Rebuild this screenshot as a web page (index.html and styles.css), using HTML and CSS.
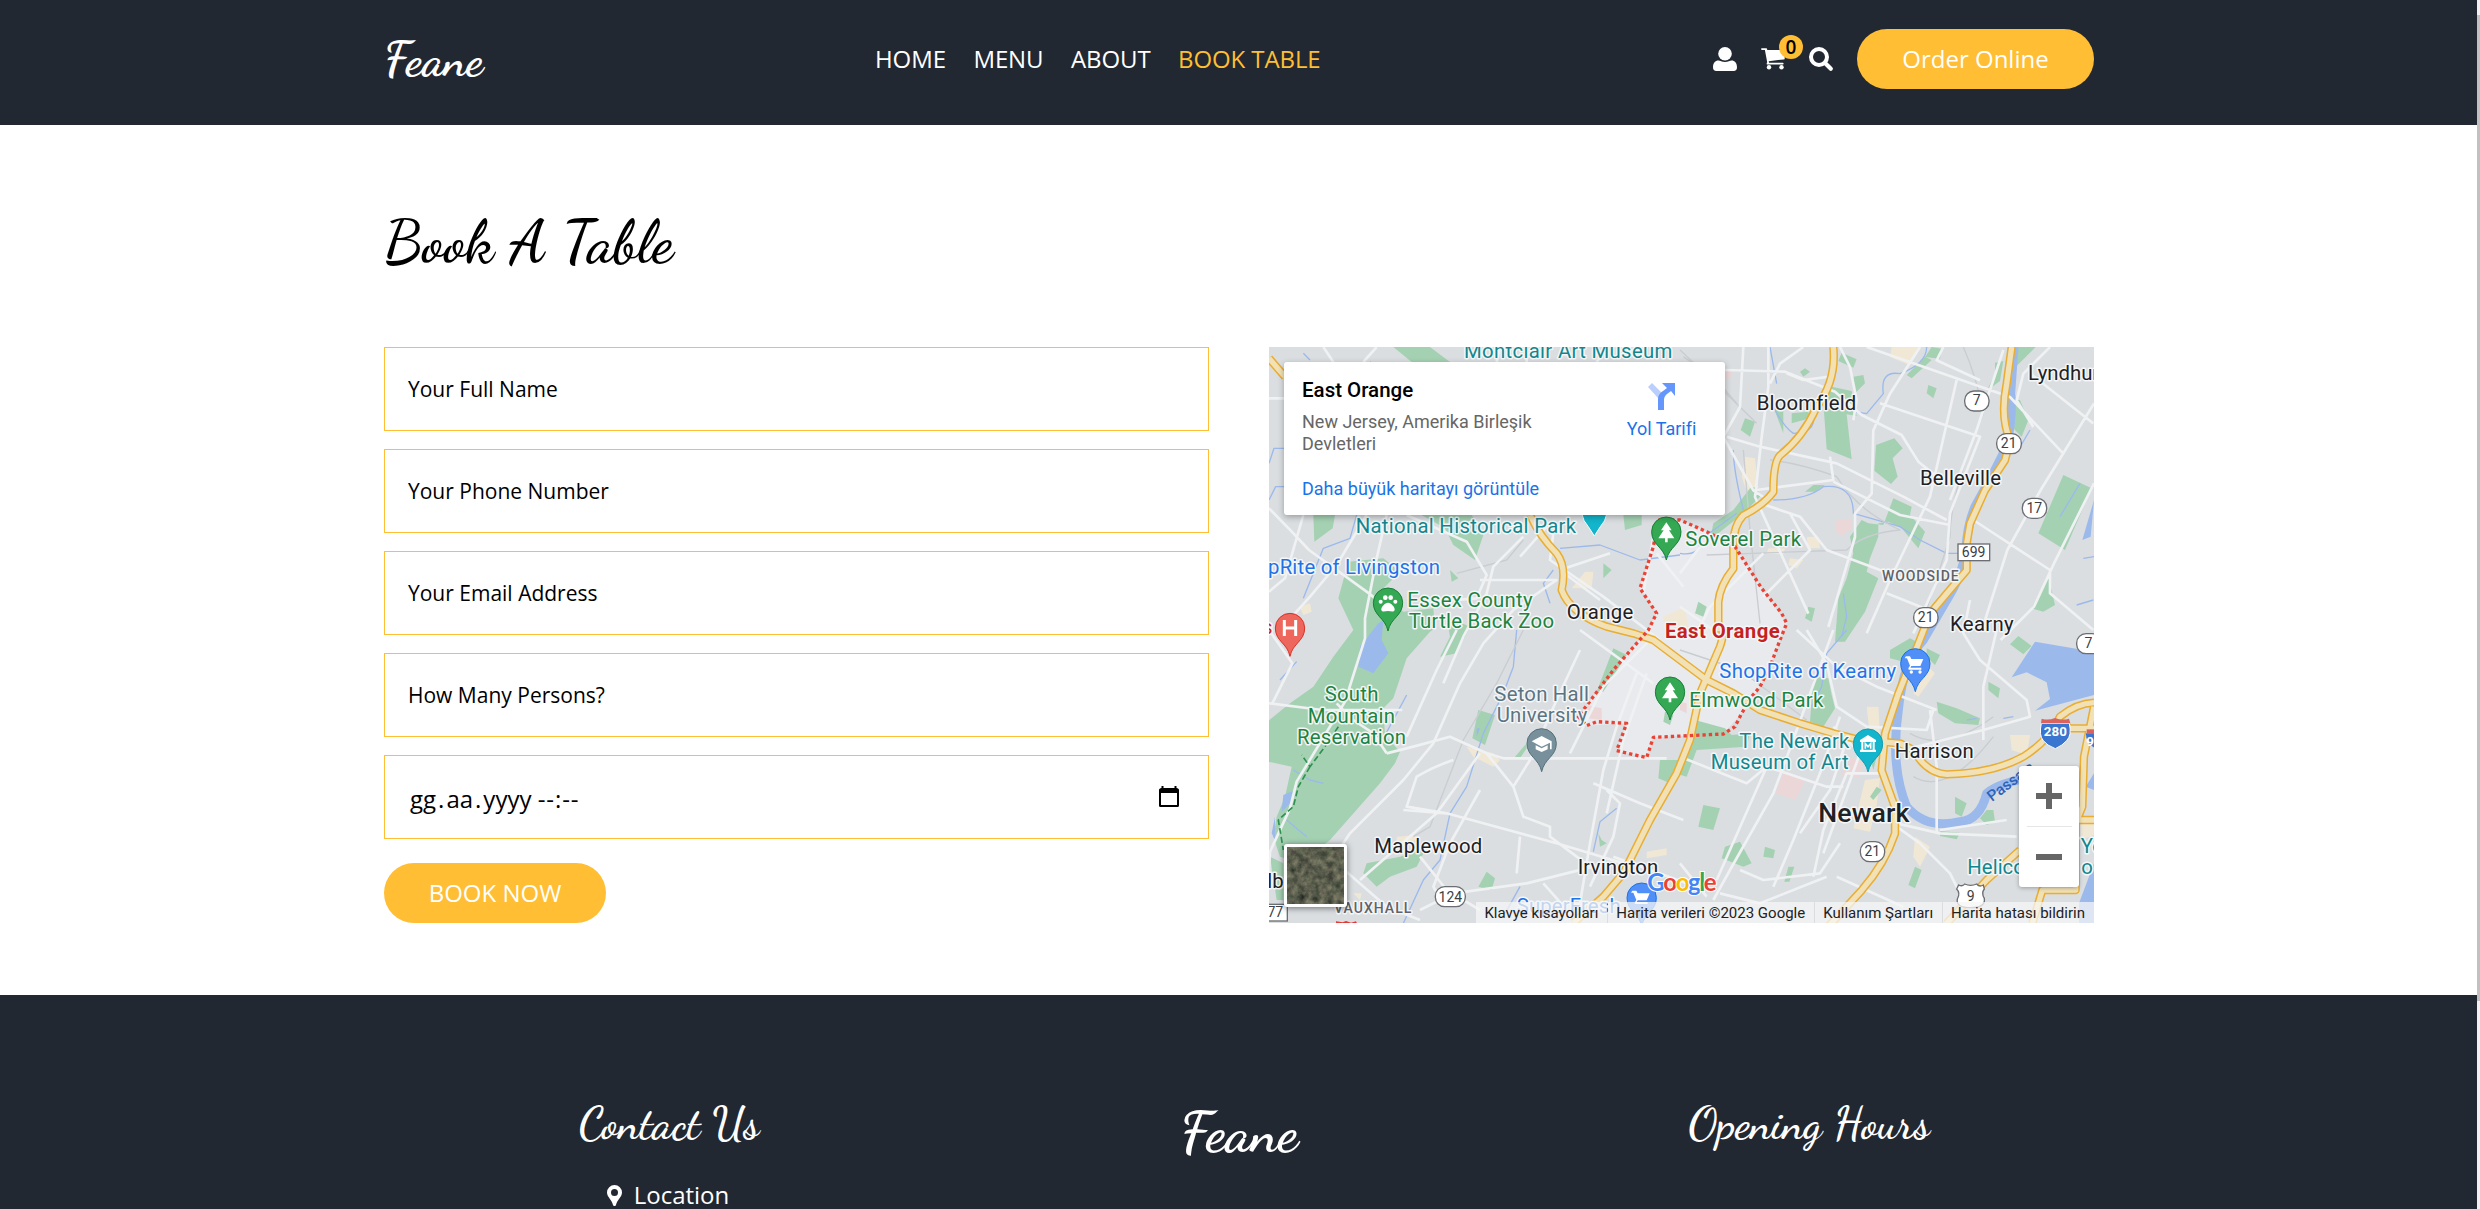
FILE: index.html
```html
<!DOCTYPE html>
<html lang="tr">
<head>
<meta charset="utf-8">
<title>Feane</title>
<link rel="stylesheet" href="styles.css">
</head>
<body>
<div class="page">
<header class="header">
  <div class="container nav">
    <a class="script brand">Feane</a>
    <nav class="links"><a>HOME</a><a>MENU</a><a>ABOUT</a><a class="active">BOOK TABLE</a></nav>
    <div class="user-option">
      <svg class="icon" viewBox="0 0 24 24"><circle cx="12" cy="6.8" r="6.8"/><path d="M0 20.2c0-4.6 2.3-6.8 5.4-6.8 1.7 0 3.5 1.6 6.6 1.6s4.9-1.6 6.6-1.6c3.100 0 5.400 2.200 5.400 6.800 0 2.500-1.200 3.800-3.300 3.800H3.300C1.200 24 0 22.700 0 20.200z"/></svg>
      <span class="cart">
        <svg class="icon" viewBox="0 0 24 24"><path d="M.8 1.200h4.300c.8 0 1 .6 1.200 1.700h16.400c.7 0 1 .4 1 1v7.500c0 .6-.4 1-.9 1L7.700 14.200l.3 1.600h13.700c1.200 0 1.200 1.800 0 1.800H6.700c-1.300 0-1.300-1.100-.5-2.400L3.900 3H.8C-.2 3-.2 1.200.8 1.200z"/><circle cx="8" cy="20.300" r="2.200"/><circle cx="20.500" cy="20.300" r="2.200"/></svg>
        <b class="badge">0</b>
      </span>
      <svg class="icon" viewBox="0 0 24 24"><circle cx="10" cy="10" r="8" fill="none" stroke="#fff" stroke-width="4"/><path d="M16.500 16.500l5.300 5.300" stroke="#fff" stroke-width="4.200" stroke-linecap="round"/></svg>
      <a class="btn order">Order Online</a>
    </div>
  </div>
</header>

<main class="container book">
  <h2 class="script title">Book A Table</h2>
  <div class="columns">
    <form class="form">
      <div class="field">Your Full Name</div>
      <div class="field">Your Phone Number</div>
      <div class="field">Your Email Address</div>
      <div class="field">How Many Persons?</div>
      <div class="field date"><span>gg<i>.</i>aa<i>.</i>yyyy <u>--:--</u></span>
        <svg class="cal" viewBox="0 0 20 22"><path fill-rule="evenodd" d="M2.500 0h2v2h11V0h2v2C19 2 20 3 20 4v15.500c0 1-.8 1.500-1.800 1.500H1.800C.8 21 0 20.500 0 19.500V4c0-1 1-2 2.500-2zM2 7v12h16V7z"/></svg>
      </div>
      <a class="btn submit">BOOK NOW</a>
    </form>
    <section class="map">
      <svg class="canvas" viewBox="27 21 2475 1728">
        <path class="inner" d="M1195 540L1260 540 1340 575 1425 620 1505 745 1580 850 1530 980 1500 1040 1445 1120 1390 1182 1180 1192 1160 1253 1070 1232 1100 1150 980 1157 955 1130 1060 990 1165 870 1190 820 1140 745 1180 620z"/>
        <g class="sand">
          <path d="M975 695l25 0-5 50-60 0zM120 800l30-10 5 25-25 10zM1210 830l65-30 15 90-70 10z"/>
          <path transform="translate(1260 0)" d="M635 21h85l-30 55-60-25zM195 350l30 5 10 90-35 10-15-45zM380 590l35 0 5 35-35 0zM265 625l50 0-5 18-50-2zM330 655l40 5-20 25-25-10z"/>
          <path transform="translate(0 870)" d="M620 350l80 20 20 20-20 20-60-30zM410 620l60-5-10 25-50 10zM1160 665l60-10 0 20-60 10zM280 790l25 0-5 20z"/>
          <path transform="translate(1260 870)" d="M555 450l45-5-10 80-20 80-50-10zM560 230l35 0 5 90-30 0zM990 315l60 0-10 60-45-15zM705 620l45 30-30 60-20-30zM745 110l20 20-50 70-15-10zM1202 570l40-5v50l-40 15z"/>
        </g>
        <g class="rose">
          <path transform="translate(1260 0)" d="M470 540l45 0 0 25-30 22-20-15zM135 95h18v20h-18z"/>
          <path transform="translate(1260 870)" d="M310 425l65 30-30 55-58-20zM510 380l40 15-15 50-50-10zM0 215l20 5 0 30-20-10z"/>
          <path d="M980 1095l45 10 0 35-40-5z"/>
        </g>
        <g class="park">
          <path d="M400 21h110l60 45H455zM160 525h65l-7 40-55 40zM485 525h150l35 60-25 75-65-45-25-50zM1090 525h55v30l-50 15zM570 690l25 25-20 10zM1030 670l25 20-25 25zM280 870l-45-95 30-110 105-10 50 40-60 60 70 60 90-10 5 60-15 10-70 80-40 120-30 30 5 80 45 50-15 35-45 60-150 170-90 70-60-20-20-60 10-60 25-60 20-90-95-20v-95l40-35 50-40 70-50 60-90zM560 830l70 30-40 80-50 10 30-60z"/>
          <path transform="translate(1260 0)" d="M485 38l45 20-10 25-45-20zM755 21l30 5-5 30-45-5zM735 50l20 10-60 55-15-10zM360 95l15-10 15 10-20 15zM520 110l30-5 5 25-30 30zM445 138l70 15 15 75-30-5 15 135-75-30-10-140zM335 220l50-5 5 20-55 15zM745 135l25 10-10 30-20-15zM945 68l25-5-10 60-40 30 25-50zM1012 21h55l-60 60zM995 180l25 0 25 60-20 50-30-30-15-45zM588 315l55-20 25 30-30 30 15 55-20 22-50-40zM195 235l30 10-15 45-28-20zM280 200h30v80zM210 445l20-5 10 30-30 30 15 20-60 20-75 60 10-50 60-40zM640 475l55 25-5 25 45 50-20 50-50-60-40-20-30 5 0 40-25 65-10 40 35 20-40 100-60 90h-30l10-130 25-60 20-75-10-50 35-50 20 10 45 5zM1150 405l85 40-80 185-80-50zM1105 705l20 90-35 20-35-10zM385 800l20 5-10 40-20-10zM55 785l25 15-10 30-25-10zM400 435l35 0-30 20-30 0z"/>
          <path transform="translate(0 870)" d="M1060 55l40 20-70 110-20 0zM655 240l50 15-30 90-38-20zM800 340l0 15-20 30-15-5zM1200 390l55 0-25 70-35-15zM1215 245l25 10-10 30-20-10zM320 700l100-20 80-30-30 60-80 30-40 30-40-40zM680 725l25 20-10 35-40-10zM1015 610l10 20 15 10-20 10zM30 680l40 20 0 110-20 0z"/>
          <path transform="translate(1260 870)" d="M45 270l90 25 20 20 55-5-10 40-150 10-30 80-35-10zM400 140l45 5 10 50 10 40-35 55-40-15zM630 60l60-35 20 10-40 60-40-10zM740 55l40 20-15 30-25-25zM770 215l60 20 70 30-5 20-70-5-50-30zM925 155l35 20-5 30-30-25zM1015 18l40 30-25 25-40-30zM70 525l50 10-20 65-45-10zM180 635l35 65-25 10-65-25 10-35zM255 650l30 10-5 25-30-5zM325 710h18l-15 45h-15zM825 500l35 20-15 40-20-10zM590 470l15 10-25 30-10-10zM780 603l60 5-10 20-50-10zM920 540l20 0 5 35-25 10-20-20zM705 710l20 10-20 55-20-10zM570 380l20 0-10 40z"/>
        </g>
        <g class="water">
          <path d="M355 850l15-10-5 60 20 40-45 60-45-20 5-60z"/>
          <path transform="translate(1260 0)" d="M1242 480l-10 110-25 10z"/>
          <path transform="translate(1260 870)" d="M1065 35l177 30v130l-177 47 45-35-10-50-60-30-45 15zM1242 430l-25 40 25 10zM1242 700l-45 120v60h45z"/>
          <path d="M70 1365l35-15-10 35-30 30zM45 1430l0 70-10-20zM650 1165l10 0-10 25z"/>
        </g>
        <g class="river">
          <path d="M2262 21L2252 160Q2260 215 2240 320L2200 400 2145 500Q2120 560 2118 630 2110 700 2060 780L1990 900Q1930 960 1915 1110 1890 1280 1940 1400 2000 1470 2100 1445 2160 1440 2180 1360 2240 1310 2440 1300"/>
        </g>
        <g class="creek">
          <path d="M320 205l-20 10M330 65l15 15M27 370l15-45h35M27 480l20-40 60 0M290 525l-20 70-80 30-60 150M900 625l120-10 120 45 120-15M880 690l-30 40 20 60M60 1020l50-55M440 1065l-70 130-60 10M770 870l-10 110-30 80-60 120-50 160-50 80-30 140-50 60-60 130-160 60-30-10M1070 1405l-50 40-20 90M100 1290l50 30 40 10M80 1440l60 50M780 1640l-50 90M150 60l-20-20"/>
          <path transform="translate(1260 0)" d="M270 21l20 110M740 21q0 50-80 80-60-10-50 60l-50 60-60-10M280 200q30 60 60 80 70 0 60-60M1050 270l-35 60M280 480q100 0 150-40 90-10 90 80l140 40 60 40 80 40h50M160 330q0 60 30 180M0 640q60 10 60-40l110-80M1200 430l-60 100M490 760l10 70-15 60M1210 655l32-5M1190 795l50-15"/>
          <path transform="translate(1260 870)" d="M500 0l-60 70-15 100-30 60M970 265l30-5M860 270l30-5"/>
        </g>
        <g class="rail">
          <path d="M1270 50l100 70 60 70M790 870l-80 160-100 170-100 260-50 30M790 600l-50 60-150 40"/>
          <path transform="translate(1260 0)" d="M0 30q120 110 230 220M850 21q40 90 60 200-100 240-100 370l-90 280M270 360q90 10 200 50 60 100 190 160-110 10-160 60l-420 15M190 330l20 240 30 280"/>
          <path transform="translate(1260 870)" d="M0 60l180 60 200 150M690 310q100 60 250-50M700 440q100 60 240-120"/>
        </g>
        <g class="road">
          <path d="M27 175h45M190 21l30 45M350 21l-40 45M720 21l-10 45M800 21v45M1040 21l-30 45M27 505q60 60 120 125l180 130 70 60M130 525l-55 190-48 40M320 525l-90 150-80 95-90 100M380 525l-30 130-35 180 0 60-60 190-145 240-20 80-60 130-5 100M440 525l180 80 60 100-30 70-130 10M790 590l-90 90-20 80-70 130-60 140M860 560l-80 90M880 580l-10 80 160 110 170 130M1050 640l-150 50 120 90M660 720l230 0-130 90-90 100-70 120-80 180-90 110-160 160-100 150M1190 640l80 100M1180 590l-30 170"/>
          <path transform="translate(1260 0)" d="M135 90l180 5 150 60 80 70 120 60 50 80 50 40M190 21l-10 180-50 90 90 160 30 20M265 21l0 120-20 150-20 180 160 350M370 21l-70 50-30 60M320 100l50 20 80-10M480 21l30 60 20 100-10 60M720 21l-90 140-50 110-5 190-50 60 0 70-50 170-30 100M560 21l430 150 160 170M790 21l-20 40 130 60M830 120l-80 350-120 250-70 160M600 190l300 100-90 230-10 140-100 220M140 290l100 30 230 50 200 100 130 70M970 30l-20 60-60 180-80 210M1110 21l-80 80-20 80 50 80M1050 100l190 150M1242 190l-160 260-100 180-70 220M1242 430l-120 240-60 130-100 100M230 450l230-30-10-70M460 425l200 100 150 30M240 490l120 40 80 100 240 90M880 540l230 150 0 70 130 110M0 800l100 70M250 640l-160 160-50 100M60 620l-60 80M620 760l150 60M330 520l60 110-80 80-60 60"/>
          <path transform="translate(0 870)" d="M27 220l160 20 240 0M380 370l80-20 110-30 110 50 50 15h150l340 0M380 370l-40-60-60-40-50-50M590 0l-60 120-90 200M760 470l50-80 80-180 70-150M680 370l80 100 30 90 80 30 0 30 120 90M660 480l-90 160-50 130 30 50M560 550l330 90 200 60M660 370l-130 180-230 200M430 540l130 10M580 390q-60 20-110 50l-30 90 120 20M1130 130l-60 160-40 130-40 220-30 180M1000 460l140 60 130 50M1170 30l-140 140-100 200M1160 130l-70 200-50 220M1040 480l40 40-20 100-70 150M960 0l220 160M660 840l-100-60-80-100M230 700l150 130 100 40M480 840l100-50 220-30 200-50M850 760l80 90M1060 680l220 80M780 620l-10 110M27 0l70 100-60 120"/>
          <path transform="translate(1260 870)" d="M0 380l200 80 60-50 180 60 50 0M0 700l80 100M260 410l-150 340M460 0l-150 410-30 80-130 230-50 90M350 0l120 110 120 60 180 70M480 260l-60 170-80 200-60 140M600 430l-100 0-70 170-30 140M460 290l80 80-110 300M380 0l60 100 30 130 90 60 180 10 20-60M750 240l20 170v200M650 590l70 50 90 90 30 60M500 330l-50 150-90 130M600 340l70 20 240-60 140-40-10-50-140-120-50-80 20-100M650 580l130 30 230 10M910 330l0-160 40-170M180 720l70 30 170-20 20-30 40-60M470 740l200 90M120 790l120 30 200-80M780 600l200-30"/>
        </g>
        <g class="hwy-edge">
          <path d="M27 55L75 110M810 525Q840 590 890 640 920 680 905 750 930 820 1040 860L1120 880 1180 900 1260 960 1340 1020 1420 1060 1500 1110 1620 1150 1720 1180 1800 1200 1920 1210 1960 1230Q2000 1300 2060 1303 2200 1300 2290 1250 2370 1200 2400 1130 2450 1090 2502 1088"/>
          <path d="M1720 21q10 100-50 180-40 90-110 145-20 20-20 110-30 40-90 70-30 30-30 90v70q-40 50-45 100v80Q1400 860 1380 920L1320 1060 1290 1200 1250 1300 1170 1440 1090 1600 1030 1670 940 1749"/>
          <path d="M2255 21l-15 110q-20 100 10 170l-15 60-60 90-45 100-10 60v80q-60 70-110 130l-35 90-60 150-40 120-10 110 40 110v80q-30 90-100 170l-120 130-70 90"/>
          <path d="M2280 1530l-100 90-120 130M2502 1100l-30 150-5 150-20 50v200l-100 0-30 100M2502 1440h-60M2502 1165h-70l-50-20"/>
        </g>
        <g class="hwy">
          <path d="M27 55L75 110M810 525Q840 590 890 640 920 680 905 750 930 820 1040 860L1120 880 1180 900 1260 960 1340 1020 1420 1060 1500 1110 1620 1150 1720 1180 1800 1200 1920 1210 1960 1230Q2000 1300 2060 1303 2200 1300 2290 1250 2370 1200 2400 1130 2450 1090 2502 1088"/>
          <path d="M1720 21q10 100-50 180-40 90-110 145-20 20-20 110-30 40-90 70-30 30-30 90v70q-40 50-45 100v80Q1400 860 1380 920L1320 1060 1290 1200 1250 1300 1170 1440 1090 1600 1030 1670 940 1749"/>
          <path d="M2255 21l-15 110q-20 100 10 170l-15 60-60 90-45 100-10 60v80q-60 70-110 130l-35 90-60 150-40 120-10 110 40 110v80q-30 90-100 170l-120 130-70 90"/>
          <path d="M2280 1530l-100 90-120 130M2502 1100l-30 150-5 150-20 50v200l-100 0-30 100M2502 1440h-60M2502 1165h-70l-50-20"/>
        </g>
        <path class="trail" d="M235 1160l-40 60-45 60-25-35M150 1280l-35 60-15 60-45 40 15 90"/>
        <path class="border" d="M1195 540L1260 540 1340 575 1425 620 1505 745 1565 820 1580 850 1560 900 1530 980 1500 1040 1475 1070 1445 1120 1425 1160 1390 1182 1180 1192 1160 1253 1070 1232 1100 1150 1010 1145 980 1157 955 1130 1060 990 1165 870 1190 820 1140 745 1180 620z"/>

        <g class="pins">
          <path fill="#12b5cb" stroke="#fff" stroke-width="3" d="M965 520q5 25 20 40l18 28 18-28q15-15 20-40z"/>
          <g transform="translate(1219 575)"><path fill="#34a853" stroke="#188038" stroke-width="3" d="M0 85C-8 45-44 40-44 0a44 44 0 0 1 88 0C44 40 8 45 0 85z"/><path fill="#fff" d="M0-28l16 24h-8l16 24H4v12h-8V20h-20l16-24h-8z"/></g>
          <g transform="translate(384 788)"><path fill="#34a853" stroke="#188038" stroke-width="3" d="M0 85C-8 45-44 40-44 0a44 44 0 0 1 88 0C44 40 8 45 0 85z"/><path fill="#fff" d="M0 0c9 0 22 14 20 22-3 8-12 3-20 3s-17 5-20-3C-22 14-9 0 0 0z"/><circle class="w" cx="-22" cy="-3" r="6"/><circle class="w" cx="22" cy="-3" r="6"/><circle class="w" cx="-8" cy="-15" r="7"/><circle class="w" cx="8" cy="-15" r="7"/></g>
          <g transform="translate(90 864)"><path fill="#ee675c" stroke="#d93025" stroke-width="3" d="M0 85C-8 45-44 40-44 0a44 44 0 0 1 88 0C44 40 8 45 0 85z"/><path fill="none" stroke="#fff" stroke-width="9" d="M-17-24v48M17-24v48M-17 0h34"/></g>
          <g transform="translate(845 1210)"><path fill="#78909c" stroke="#546e7a" stroke-width="3" d="M0 85C-8 45-44 40-44 0a44 44 0 0 1 88 0C44 40 8 45 0 85z"/><path fill="#fff" d="M0-22L30-6v24h-5V-2L0 10-30-6zM-18 6L0 15l18-9v12L0 26l-18-8z"/></g>
          <g transform="translate(1230 1055)"><path fill="#34a853" stroke="#188038" stroke-width="3" d="M0 85C-8 45-44 40-44 0a44 44 0 0 1 88 0C44 40 8 45 0 85z"/><path fill="#fff" d="M0-28l16 24h-8l16 24H4v12h-8V20h-20l16-24h-8z"/></g>
          <g transform="translate(1966 970)"><path fill="#4f8ff7" stroke="#1a73e8" stroke-width="3" d="M0 85C-8 45-44 40-44 0a44 44 0 0 1 88 0C44 40 8 45 0 85z"/><path fill="#fff" d="M-28-21h12l4 8h36L15 8h-27l-3 5h33v6h-38l-1-4 5-8-9-22h-7z"/><circle class="w" cx="-12" cy="26" r="5"/><circle class="w" cx="14" cy="26" r="5"/></g>
          <g transform="translate(1824 1211)"><path fill="#12b5cb" stroke="#129eaf" stroke-width="3" d="M0 85C-8 45-44 40-44 0a44 44 0 0 1 88 0C44 40 8 45 0 85z"/><path fill="#fff" d="M0-26l24 15v6h-48v-6zM-24 18h48v7h-48zM-20-5h6v24h-6zM14-5h6v24h-6z"/><path fill="none" stroke="#fff" stroke-width="5" d="M-8 15V0L0 9 8 0v15"/></g>
          <g transform="translate(1145 1673)"><path fill="#4f8ff7" stroke="#1a73e8" stroke-width="3" d="M0 85C-8 45-44 40-44 0a44 44 0 0 1 88 0C44 40 8 45 0 85z"/><path fill="#fff" d="M-28-21h12l4 8h36L15 8h-27l-3 5h33v6h-38l-1-4 5-8-9-22h-7z"/></g>
        </g>

        <g class="shields">
          <rect x="2114" y="153" width="73" height="60" rx="28"/><rect x="2210" y="281" width="74" height="60" rx="28"/><rect x="2287" y="475" width="73" height="60" rx="28"/><rect x="1961" y="803" width="73" height="60" rx="28"/><rect x="2450" y="881" width="74" height="60" rx="28"/><rect x="1801" y="1505" width="73" height="60" rx="28"/><rect x="526" y="1640" width="90" height="60" rx="28"/>
          <rect x="2094" y="612" width="95" height="50"/><rect x="10" y="1693" width="72" height="50"/>
          <path d="M2096 1635q12 6 18-3 18 8 36 0 8 10 20 3l3 12q-10 12 0 28 4 28-41 28t-40-26q10-18-2-30z"/>
          <text x="2150" y="196">7</text><text x="2246" y="325">21</text><text x="2323" y="519">17</text><text x="1997" y="847">21</text><text x="2485" y="925">7</text><text x="1837" y="1549">21</text><text x="571" y="1686">124</text><text x="2141" y="651">699</text><text x="46" y="1732">77</text><text x="2132" y="1684">9</text>
        </g>
        <path fill="#3a76cf" stroke="#fff" stroke-width="3" d="M2344 1150h84q8 36-8 52-12 14-34 24-26-10-36-24-14-16-6-52z"/><path fill="#d9635f" d="M2345 1136q20 6 40-2 22 8 42 2l4 14h-88z"/><text class="inter" x="2386" y="1189">280</text>
        <path fill="#3a76cf" d="M2478 1180h40v50q-42-15-40-50z"/><path fill="#d9635f" d="M2480 1168h30v12h-30z"/><text class="inter" x="2502" y="1218">95</text>

        <g class="lbl teal">
          <text x="612" y="55" textLength="625">Montclair Art Museum</text>
          <text x="287" y="578" textLength="661">National Historical Park</text>
          <text x="1438" y="1223" textLength="330">The Newark</text>
          <text x="1352" y="1286" textLength="414">Museum of Art</text>
          <text x="2122" y="1603" textLength="280">Helicopter</text><text x="2462" y="1538">Yo</text><text x="2464" y="1603">o</text>
        </g>
        <g class="lbl green">
          <text x="1276" y="618" textLength="347">Soverel Park</text>
          <text x="442" y="802" textLength="376">Essex County</text><text x="446" y="864" textLength="436">Turtle Back Zoo</text>
          <text x="194" y="1083" textLength="161">South</text><text x="143" y="1148" textLength="262">Mountain</text><text x="111" y="1212" textLength="327">Reservation</text>
          <text x="1288" y="1100" textLength="402">Elmwood Park</text>
        </g>
        <g class="lbl blue">
          <text x="24" y="702" textLength="516">pRite of Livingston</text>
          <text x="1378" y="1015" textLength="530">ShopRite of Kearny</text>
          <text x="770" y="1720" textLength="312">SuperFresh</text>
        </g>
        <g class="lbl slate"><text x="703" y="1082" textLength="284">Seton Hall</text><text x="710" y="1145" textLength="272">University</text></g>
        <g class="lbl town">
          <text x="1490" y="210" textLength="299">Bloomfield</text><text x="2304" y="120">Lyndhurst</text><text x="1980" y="436" textLength="243">Belleville</text>
          <text x="920" y="836" textLength="200">Orange</text><text x="2070" y="874" textLength="191">Kearny</text><text x="1904" y="1254" textLength="237">Harrison</text>
          <text x="343" y="1540" textLength="324">Maplewood</text><text x="953" y="1603" textLength="242">Irvington</text><text x="22" y="1644">lb</text>
        </g>
        <text class="lbl city" x="1675" y="1446" textLength="273">Newark</text>
        <g class="lbl area"><text x="1866" y="724" textLength="230">WOODSIDE</text><text x="222" y="1720" textLength="232">VAUXHALL</text></g>
        <text class="lbl place" x="1215" y="893" textLength="344">East Orange</text>
        <text class="rivername" transform="translate(2196 1386) rotate(-37)">Passaic</text>
        <text class="lbl red" x="6" y="882">s</text>
        <path fill="#e53935" d="M228 1744l20 3 10-4 15 5 15-4 4 8h-64z"/>
        <text class="google" x="1162" y="1653" textLength="208"><tspan fill="#4285f4">G</tspan><tspan fill="#ea4335">o</tspan><tspan fill="#fbbc05">o</tspan><tspan fill="#4285f4">g</tspan><tspan fill="#34a853">l</tspan><tspan fill="#ea4335">e</tspan></text>
      </svg>
      <div class="card">
        <div class="place-info"><h3>East Orange</h3><p>New Jersey, Amerika Birleşik Devletleri</p><a>Daha büyük haritayı görüntüle</a></div>
        <div class="dir"><svg viewBox="0 0 27 27"><path fill="#bbcffd" d="M4 0L0 4l10 11 6-3z"/><path fill="#6596fc" d="M10 27V17c0-5 2-7 5-9l4-3-5-5h13v13l-4-5-4 3c-2 2-3 3-3 6v10z"/></svg><a>Yol Tarifi</a></div>
      </div>
      <svg class="thumb" viewBox="0 0 63 63"><defs><filter id="terrain" x="0" y="0" width="1" height="1" color-interpolation-filters="sRGB"><feTurbulence type="fractalNoise" baseFrequency=".14" numOctaves="5" seed="8"/><feColorMatrix values=".35 .25 0 0 .06 .28 .28 0 0 .09 .25 .2 0 0 .08 0 0 0 0 1"/></filter></defs><rect width="63" height="63" rx="3" fill="#fff"/><rect x="3" y="3" width="57" height="57" filter="url(#terrain)"/></svg>
      <div class="zoom"><span class="plus"></span><span class="minus"></span></div>
      <div class="legal"><span>Klavye kısayolları</span><span>Harita verileri ©2023 Google</span><span>Kullanım Şartları</span><span>Harita hatası bildirin</span></div>
    </section>
  </div>
</main>

<footer class="footer">
  <div class="container foot">
    <div><h4 class="script contact">Contact Us</h4>
      <p class="loc"><svg viewBox="0 0 15 21"><path fill-rule="evenodd" d="M7.500 0A7.500 7.500 0 0 0 0 7.500C0 12 5 15 6 20c.4 1.300 2.600 1.300 3 0 1-5 6-8 6-12.500A7.500 7.500 0 0 0 7.500 0zm0 4a3.500 3.500 0 1 1 0 7 3.500 3.500 0 0 1 0-7z"/></svg>Location</p></div>
    <div><span class="script logo">Feane</span></div>
    <div><h4 class="script hours">Opening Hours</h4></div>
  </div>
</footer>
</div>
<div class="scrollbar"></div>
</body>
</html>
```
FILE: styles.css
```css
* { box-sizing: border-box; }
body { margin: 0; display: flex; height: 1209px; overflow: hidden; background: #fff; color: #000; font: 24px/1.5 "Open Sans", sans-serif; }
h2, h3, h4, p { margin: 0; font-weight: 400; }
.page { flex: 1; height: 1209px; overflow: hidden; }
.scrollbar { width: 3px; background: linear-gradient(#f1f1f1 15px, #c1c1c1 15px 1001px, #f1f1f1 1001px); }
.container { width: 1710px; margin: 0 auto 0 384px; }
.script { font-family: "Dancing Script", "Liberation Serif", cursive; line-height: 1; white-space: nowrap; }

.header { height: 125px; background: #222831; }
.nav { height: 118px; display: flex; align-items: center; color: #fff; }
.brand { width: 491px; padding-top: 1px; font-size: 48px; font-weight: 700; }
.links { display: flex; gap: 27.500px; font-size: 24px; letter-spacing: -.1px; }
.links .active { color: #ffbe33; }
.user-option { display: flex; align-items: center; gap: 24px; margin-left: auto; }
.icon { display: block; width: 24px; height: 24px; fill: #fff; overflow: visible; }
.cart { position: relative; }
.badge { position: absolute; left: 18px; top: -12px; width: 24px; height: 24px; border-radius: 50%; background: #ffbe33; color: #000; font-size: 19px; line-height: 25px; text-align: center; font-weight: 600; }
.btn { display: flex; align-items: center; justify-content: center; height: 60px; border-radius: 68px; background: #ffbe33; color: #fff; }
.order { width: 237px; }

.book { padding-top: 77px; height: 870px; }
.title { height: 145px; font-size: 60px; line-height: 80px; font-weight: 600; }
.columns { display: grid; grid-template-columns: 825px 825px; gap: 60px; }
.form { display: flex; flex-direction: column; gap: 18px; }
.field { height: 84px; border: 1px solid #ffbe33; padding: 1px 23px 0; display: flex; align-items: center; font-size: 21px; }
.date { justify-content: space-between; padding: 0 29px 0 25px; font-size: 24px; }
.date span { padding-top: 3px; }
.date i { font-style: normal; padding: 0 2px; }
.date u { text-decoration: none; letter-spacing: .9px; }
.cal { width: 20px; height: 22px; }
.submit { width: 222px; margin-top: 6px; }

.map { position: relative; width: 825px; height: 576px; overflow: hidden; background: #dadee1; font-family: Roboto, sans-serif; }
.canvas { display: block; width: 825px; height: 576px; }
.inner { fill: #e8eaed; }
.sand { fill: #f0e8d5; }
.rose { fill: #ecd7d8; }
.park { fill: #a5d1b3; }
.water { fill: #9cb9ec; }
.w { fill: #fff; }
.river, .creek, .rail, .road, .hwy, .hwy-edge, .trail, .border { fill: none; stroke-linejoin: round; }
.river { stroke: #9cb9ec; stroke-width: 27; }
.creek { stroke: #9cb9ec; stroke-width: 4; }
.rail { stroke: #c9cdd1; stroke-width: 4; }
.road { stroke: #eff1f3; stroke-width: 8; }
.hwy-edge { stroke: #e9ad32; stroke-width: 25; }
.hwy { stroke: #f1e1b5; stroke-width: 16; }
.trail { stroke: #2f9150; stroke-width: 5; stroke-dasharray: 18 9; }
.border { stroke: #ea4335; stroke-width: 10; stroke-dasharray: 10 9; }
.shields rect, .shields path { fill: #fff; stroke: #6b6e72; stroke-width: 4; }
.shields text { font-size: 42px; fill: #3c4043; text-anchor: middle; }
.inter { font-size: 40px; font-weight: 700; fill: #fff; text-anchor: middle; }
.lbl { font-size: 61px; paint-order: stroke; stroke: #f5f6f7; stroke-width: 9px; stroke-linejoin: round; }
.teal { fill: #12868e; }
.green { fill: #1c8440; }
.blue { fill: #1f73e8; }
.slate { fill: #5b7482; }
.town { fill: #202124; }
.city { fill: #202124; font-size: 80px; font-weight: 500; }
.area { fill: #5f6368; font-size: 42px; font-weight: 500; }
.place { fill: #c5221f; font-weight: 700; }
.red { fill: #c5221f; }
.rivername { fill: #2c62b8; font-size: 46px; font-weight: 500; }
.google { font: 72px Lato, sans-serif; font-weight: 700; paint-order: stroke; stroke: #fff; stroke-width: 6px; }

.card { position: absolute; left: 15px; top: 15px; width: 441px; height: 153px; padding: 14px 18px 0; display: flex; justify-content: space-between; background: #fff; border-radius: 3px; box-shadow: 0 2px 6px rgba(0,0,0,.3); font-size: 18px; line-height: 22px; }
.place-info { width: 260px; }
.card h3 { font-size: 20.5px; line-height: 28px; font-weight: 500; }
.card p { color: #666; margin: 7px 0 23px; }
.card a { color: #1a73e8; }
.place-info a { white-space: nowrap; }
.dir { width: 91px; display: flex; flex-direction: column; align-items: center; padding-top: 7px; gap: 8px; }
.dir svg { width: 27px; height: 27px; }
.thumb { position: absolute; left: 15px; top: 497px; width: 63px; height: 63px; filter: drop-shadow(0 1px 3px rgba(0,0,0,.5)); }
.zoom { position: absolute; left: 750px; top: 419px; width: 60px; height: 121px; border-radius: 3px; background: linear-gradient(#e6e6e6, #e6e6e6) 50% 60px / 45px 1px no-repeat #fff; box-shadow: 0 1px 4px rgba(0,0,0,.3); }
.plus, .minus { display: block; width: 26px; height: 26px; margin: 17px auto 0; background: linear-gradient(#666, #666) center / 26px 6px no-repeat; }
.plus { background: linear-gradient(#666, #666) center / 26px 6px no-repeat, linear-gradient(#666, #666) center / 6px 26px no-repeat; }
.minus { margin-top: 35px; }
.legal { position: absolute; right: 0; bottom: 0; height: 21px; display: flex; gap: 1px; font-size: 15px; line-height: 22px; color: #222; white-space: nowrap; }
.legal span { padding: 0 9px 0 8px; background: rgba(245,245,245,.75); }

.footer { height: 214px; background: #222831; color: #fff; }
.foot { display: grid; grid-template-columns: repeat(3, 1fr); text-align: center; padding-top: 107px; }
.contact, .hours { font-size: 45px; font-weight: 600; height: 77px; }
.logo { display: block; font-size: 57px; font-weight: 700; padding-top: 3px; }
.loc { display: flex; justify-content: center; align-items: center; gap: 12px; line-height: 32px; padding-right: 2px; }
.loc svg { width: 15px; height: 21px; fill: #fff; }
```
